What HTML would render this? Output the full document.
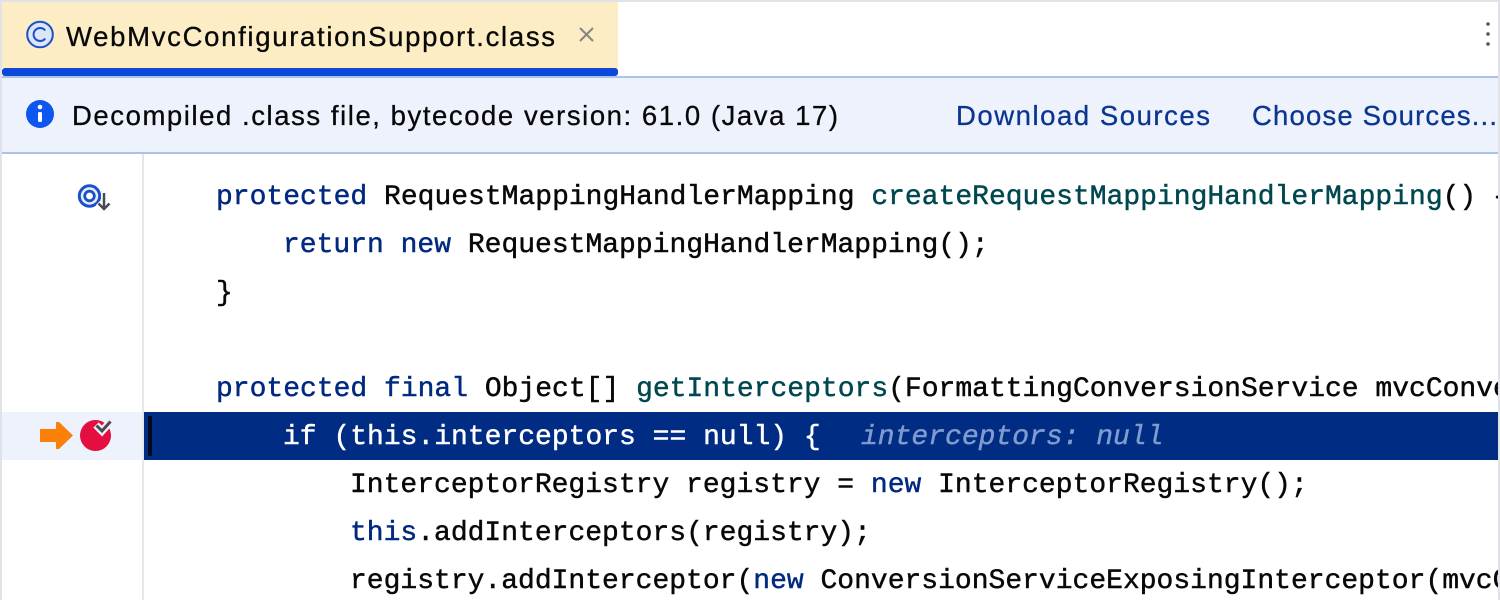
<!DOCTYPE html>
<html><head><meta charset="utf-8"><style>
html,body{margin:0;padding:0;background:#fff}
svg{display:block}
.m{font-family:"Liberation Mono",monospace;font-size:28px;fill:#080808;stroke-width:.45px}
.m text{stroke:#080808}
.m .k{fill:#00297f;stroke:#00297f}
.m .f{fill:#00484f;stroke:#00484f}
.s{font-family:"Liberation Sans",sans-serif;font-size:27.5px;stroke-width:.3px}
</style></head><body>
<svg xmlns="http://www.w3.org/2000/svg" width="1500" height="600" viewBox="0 0 1500 600">
<rect width="1500" height="600" fill="#fff"/>
<rect x="2" y="2" width="616" height="66" fill="#fdedc4"/>
<rect x="2" y="68" width="616" height="8" rx="3" fill="#0d48d8"/>
<rect x="2" y="76" width="1496" height="2" fill="#a8c4ec"/>
<rect x="2" y="78" width="1496" height="74" fill="#edf2fd"/>
<rect x="2" y="152" width="1496" height="2" fill="#a8c4ec"/>
<rect x="142" y="154" width="2" height="446" fill="#e6e7ea"/>
<rect x="2" y="412" width="140" height="48" fill="#edf2fd"/>
<rect x="144" y="412" width="1354" height="48" fill="#012c83"/>
<rect x="148" y="416" width="4" height="40" fill="#020a1e"/>
<rect width="1500" height="2" fill="#e2e3e8"/>
<rect width="2" height="600" fill="#e2e3e8"/>
<rect x="1498" width="2" height="600" fill="#e2e3e8"/>

<circle cx="40" cy="34.500" r="12.800" fill="#dbe6fb" stroke="#1c50c8" stroke-width="2"/>
<path d="M45.200 30.500a6.500 6.500 0 1 0 0 8" fill="none" stroke="#1c50c8" stroke-width="2"/>
<text x="66" y="46" class="s" fill="#080808" stroke="#080808" textLength="489" lengthAdjust="spacing">WebMvcConfigurationSupport.class</text>
<path d="M580 28l13 13M593 28l-13 13" stroke="#858585" stroke-width="2"/>
<circle cx="1488" cy="24" r="1.800" fill="#555"/><circle cx="1488" cy="34" r="1.800" fill="#555"/><circle cx="1488" cy="44" r="1.800" fill="#555"/>

<circle cx="40" cy="114" r="14" fill="#0e56f0"/>
<rect x="38" y="112" width="4" height="10" rx="1.500" fill="#fff"/>
<circle cx="40" cy="107" r="2.300" fill="#fff"/>
<text x="72" y="125" class="s" fill="#080808" stroke="#080808" textLength="766" lengthAdjust="spacing">Decompiled .class file, bytecode version: 61.0 (Java 17)</text>
<text x="956" y="125" class="s" fill="#0b3690" stroke="#0b3690" textLength="254" lengthAdjust="spacing">Download Sources</text>
<text x="1252" y="125" class="s" fill="#0b3690" stroke="#0b3690" textLength="245" lengthAdjust="spacing">Choose Sources...</text>

<circle cx="89.500" cy="196" r="10.200" fill="#e6eefc" stroke="#1c50c8" stroke-width="3"/>
<circle cx="89.500" cy="196" r="4.800" fill="#fff" stroke="#1c50c8" stroke-width="2.800"/>
<path d="M104 192v17M98 203l6 6 6-6" fill="none" stroke="#fff" stroke-width="6"/>
<path d="M104 193v16M98.500 203.500l5.500 5.500 5.500-5.500" fill="none" stroke="#474b57" stroke-width="2.500"/>

<path d="M40 429h16v-6q0-1.500 1.500-1h1.500l14 13.500-14 13.500h-1.500q-1.500.5-1.500-1v-6h-16z" fill="#fc8008"/>
<circle cx="95.500" cy="435.500" r="15.500" fill="#e50e40"/>
<path d="M96 425l6 6 9-10" fill="none" stroke="#f4f0f2" stroke-width="7.500"/>
<path d="M96.500 425.500l5.500 5.500 8.500-9.500" fill="none" stroke="#474b57" stroke-width="3"/>

<g class="m">
<text x="216" y="204"><tspan class="k">protected</tspan> RequestMappingHandlerMapping <tspan class="f">createRequestMappingHandlerMapping</tspan>() {</text>
<text x="283" y="252"><tspan class="k">return new</tspan> RequestMappingHandlerMapping();</text>
<text x="216" y="300">}</text>
<text x="216" y="396"><tspan class="k">protected final</tspan> Object[] <tspan class="f">getInterceptors</tspan>(FormattingConversionService mvcConversionService</text>
<text x="283" y="444" style="fill:#fff;stroke:#fff">if (this.interceptors == null) {</text>
<text x="861" y="444" style="fill:#7f9ccf;stroke:#7f9ccf;font-style:italic">interceptors: null</text>
<text x="350" y="492">InterceptorRegistry registry = <tspan class="k">new</tspan> InterceptorRegistry();</text>
<text x="350" y="540"><tspan class="k">this</tspan>.addInterceptors(registry);</text>
<text x="350" y="588">registry.addInterceptor(<tspan class="k">new</tspan> ConversionServiceExposingInterceptor(mvcConversionService</text>
</g>
<rect x="1498" width="2" height="600" fill="#e2e3e8"/>
</svg>
</body></html>
